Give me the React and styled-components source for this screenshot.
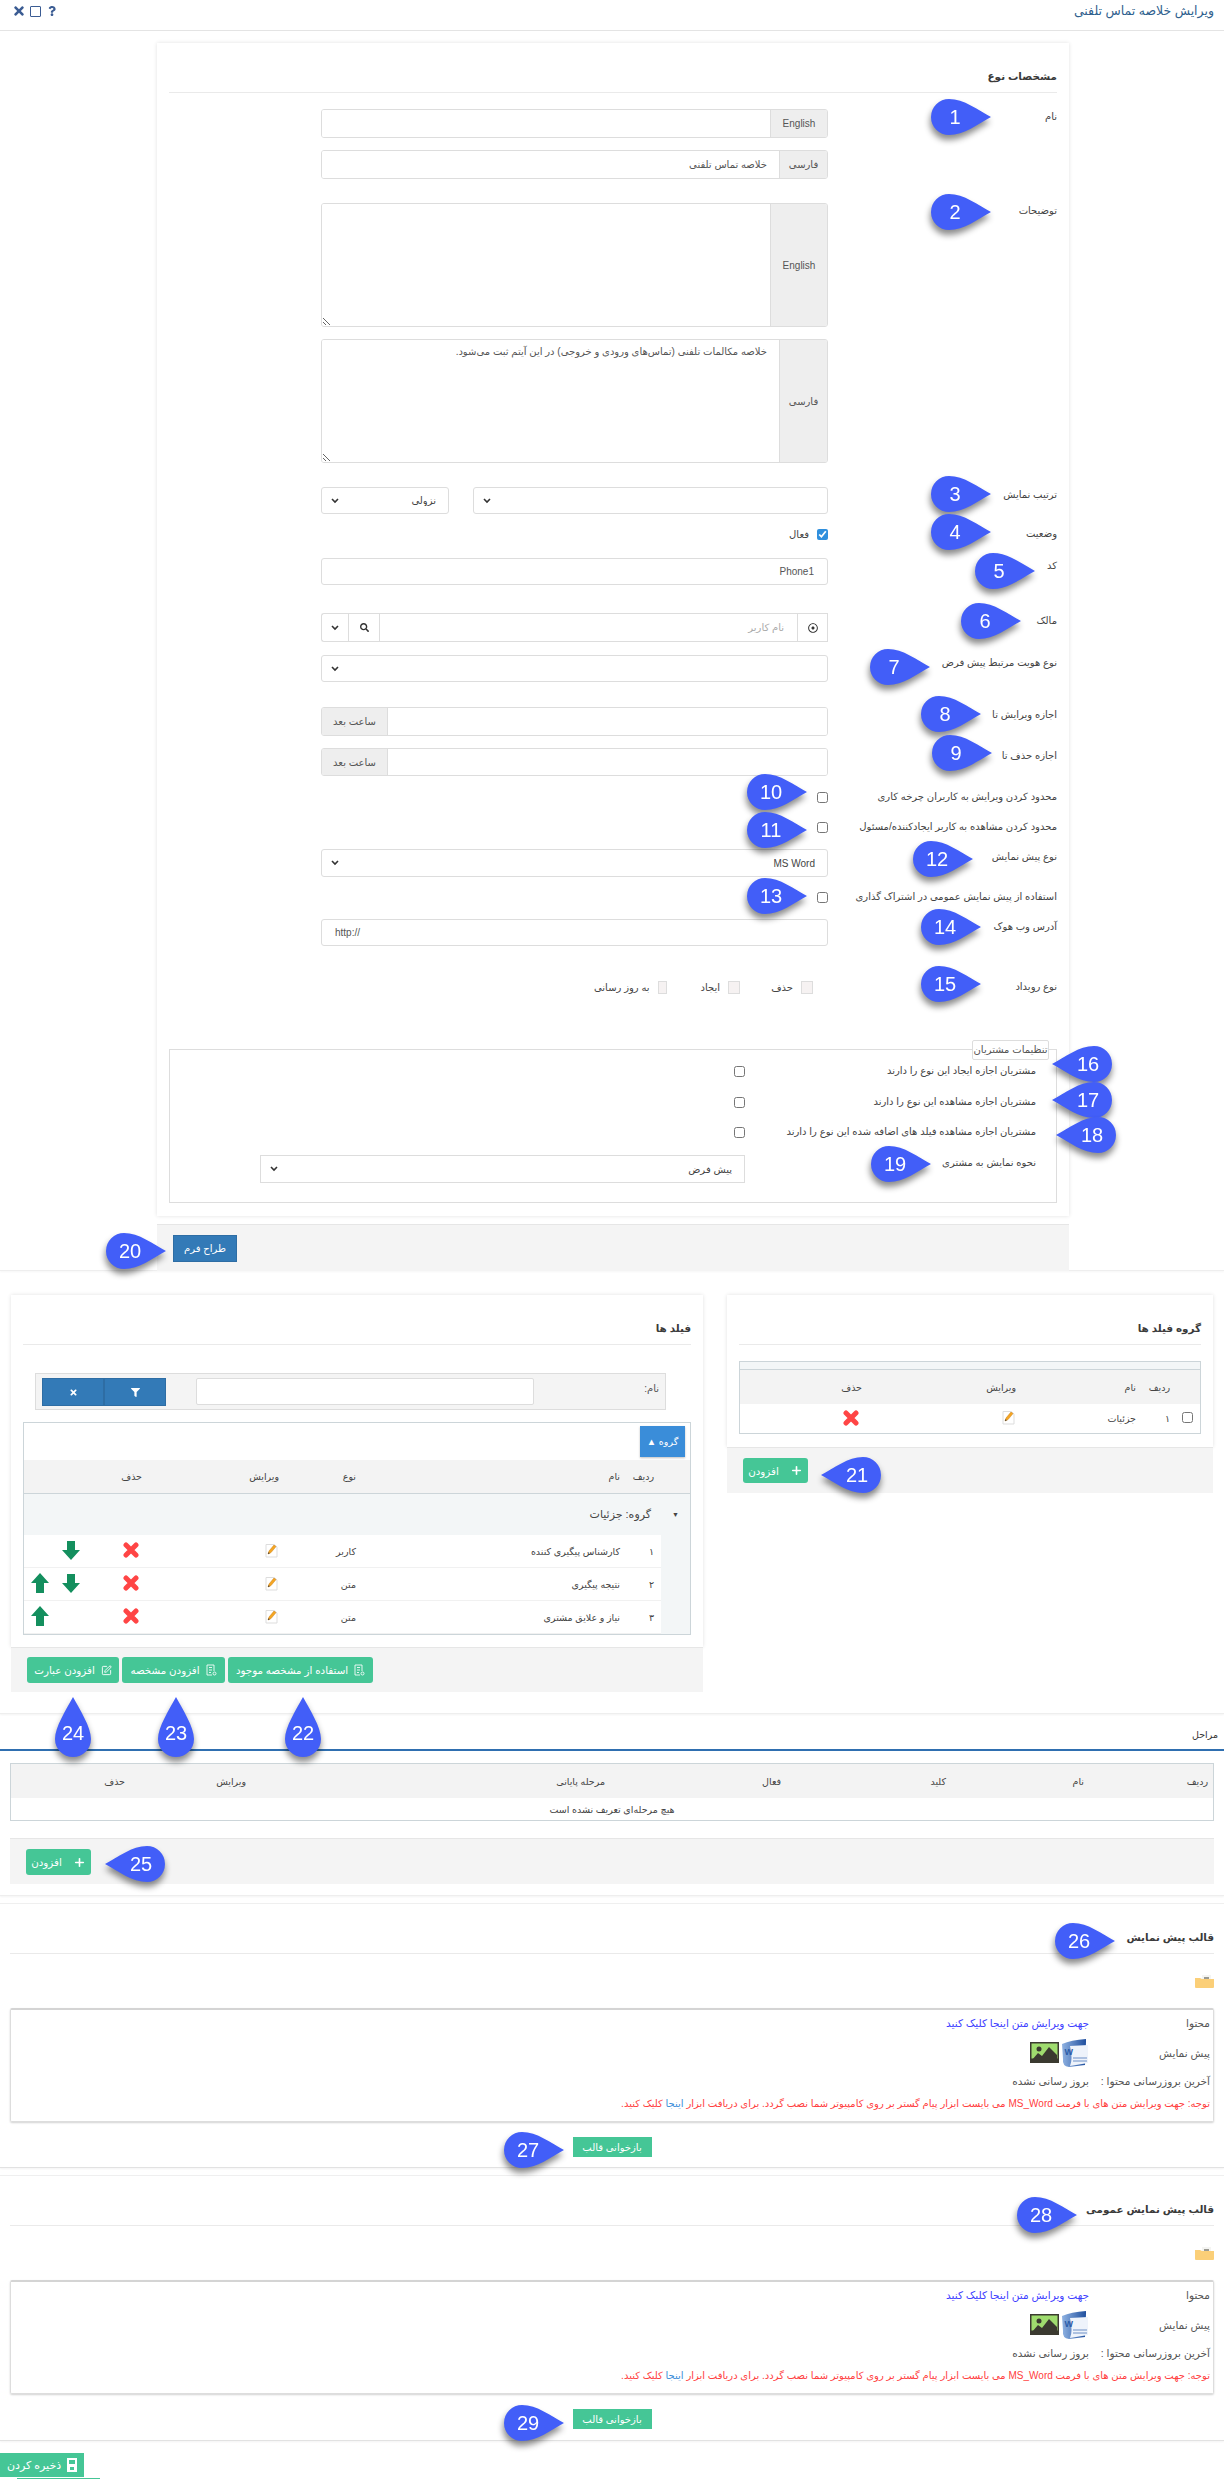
import React from 'react';
import styled, { createGlobalStyle } from 'styled-components';
import { FaTimes, FaFilter, FaSearch, FaQuestion, FaRegDotCircle } from 'react-icons/fa';
import { SquarePen, Plus } from 'lucide-react';

const stack = `"Liberation Sans", "DejaVu Sans", sans-serif`;

const Global = createGlobalStyle`
  html, body { margin: 0; padding: 0; background: #fff; }
  body { font-family: ${stack}; font-size: 10px; color: #555; }
  * { box-sizing: border-box; }
`;

const chevron = `url("data:image/svg+xml,%3Csvg xmlns='http://www.w3.org/2000/svg' width='8' height='6'%3E%3Cpath d='M1 1l3 3 3-3' fill='none' stroke='%23333' stroke-width='1.6'/%3E%3C/svg%3E")`;

const Page = styled.div`
  position: relative;
  width: 1224px;
  height: 2482px;
  overflow: hidden;
  direction: rtl;
`;
const TitleBar = styled.header`
  height: 31px;
  padding: 3px 10px 0 10px;
  border-bottom: 1px solid #e4e4e4;
  display: flex;
  justify-content: space-between;
  align-items: flex-start;
`;
const PageTitle = styled.h1`
  margin: 0;
  font-size: 12.5px;
  line-height: 16px;
  font-weight: 400;
  color: #2f5f8e;
`;
const WindowTools = styled.div`
  direction: ltr;
  display: flex;
  align-items: center;
  gap: 4px;
  height: 16px;
  padding-left: 2px;
  color: #3b5c93;
`;
const MaxBox = styled.span`
  display: block;
  width: 11px;
  height: 11px;
  border: 1px solid #3b5c93;
  border-radius: 1px;
`;
const FormSection = styled.section`
  height: 1240px;
  padding-top: 12px;
  border-bottom: 1px solid #eee;
  box-shadow: 0 1px 2px rgba(0, 0, 0, 0.04);
`;
const Card = styled.div`
  background: #fff;
  padding: 0 12px ${p => p.$pb || 12}px;
  box-shadow: 0 0 4px rgba(0, 0, 0, 0.12);
`;
const MainCard = styled(Card)`
  width: 912px;
  margin-right: 155px;
`;
const CardHeader = styled.div`
  height: 50px;
  padding-top: 25px;
  border-bottom: 1px solid #eaeaea;
`;
const CardTitle = styled.h2`
  margin: 0;
  font-size: 10.4px;
  line-height: 18px;
  font-weight: 700;
  color: #3a3a3a;
`;
const FormRow = styled.div`
  display: grid;
  grid-template-columns: ${p => p.$label || 229}px ${p => p.$control || 507}px;
  margin-top: ${p => p.$mt || 0}px;
  align-items: start;
`;
const FieldLabel = styled.label`
  font-size: 10px;
  line-height: 16px;
  color: #444;
  white-space: nowrap;
`;
const Stack = styled.div`
  display: flex;
  flex-direction: column;
  gap: 12px;
`;
const InputGroup = styled.div`
  display: flex;
  height: ${p => p.$h || 29}px;
  border: 1px solid #ddd;
  border-radius: 3px;
  overflow: hidden;
`;
const Addon = styled.span`
  flex: none;
  width: ${p => p.$w}px;
  display: flex;
  align-items: center;
  justify-content: center;
  background: #eee;
  font-family: ${stack};
  font-size: 10px;
  color: #555;
  border-${p => (p.$end ? 'right' : 'left')}: 1px solid #ddd;
`;
const BareInput = styled.input`
  flex: 1;
  min-width: 0;
  border: 0;
  outline: 0;
  padding: 0 12px;
  background: #fff;
  font: 10px ${stack};
  color: #555;
  direction: rtl;
  &::placeholder { color: #aaa; }
`;
const BareArea = styled.textarea`
  flex: 1;
  min-width: 0;
  border: 0;
  outline: 0;
  padding: 4px 12px;
  background: #fff;
  font: 10px/16px ${stack};
  color: #555;
  direction: rtl;
  resize: both;
`;
const TextInput = styled.input`
  display: block;
  width: 100%;
  height: ${p => p.$h || 27}px;
  padding: 0 13px;
  border: 1px solid #ddd;
  border-radius: 3px;
  background: #fff;
  font: 10px ${stack};
  color: #555;
  direction: ${p => (p.$ltr ? 'ltr' : 'rtl')};
  outline: 0;
`;
const Select = styled.select`
  appearance: none;
  display: block;
  flex: ${p => (p.$w ? 'none' : '1')};
  width: ${p => (p.$w ? `${p.$w}px` : '100%')};
  height: ${p => p.$h || 27}px;
  padding: 0 12px 0 24px;
  border: 1px solid #ddd;
  border-radius: ${p => (p.$square ? 0 : 3)}px;
  background: #fff ${chevron} no-repeat left 9px center;
  font: 10px ${stack};
  color: #444;
  direction: rtl;
  outline: 0;
`;
const SplitRow = styled.div`
  display: flex;
  justify-content: space-between;
  gap: 24px;
`;
const CheckLine = styled.div`
  display: flex;
  align-items: center;
  height: 16px;
  gap: ${p => p.$gap || 8}px;
`;
const Check = styled.input.attrs({ type: 'checkbox' })`
  width: 11px;
  height: 11px;
  margin: 0;
  accent-color: #2f8fdd;
`;
const MutedCheck = styled.input.attrs({ type: 'checkbox', disabled: true })`
  appearance: none;
  width: 12px;
  height: 13px;
  margin: 0;
  background: #f6f2f2;
  border: 1px solid #ddd;
`;
const CheckText = styled.span`
  font-size: 10px;
  color: #444;
  white-space: nowrap;
`;
const OwnerGroup = styled.div`
  display: flex;
  height: 29px;
`;
const OwnerAddon = styled.span`
  flex: none;
  width: ${p => p.$w}px;
  display: flex;
  align-items: center;
  justify-content: center;
  background: #fff;
  border: 1px solid #ddd;
  border-right-width: ${p => (p.$first ? 1 : 0)}px;
  color: #333;
`;
const OwnerInput = styled.input`
  flex: 1;
  min-width: 0;
  border: 1px solid #ddd;
  border-right: 0;
  padding: 0 13px;
  font: 10px ${stack};
  outline: 0;
  &::placeholder { color: #aaa; }
`;
const OwnerSelect = styled.span`
  flex: none;
  width: 27px;
  border: 1px solid #ddd;
  border-right: 0;
  border-radius: 3px 0 0 3px;
  background: #fff ${chevron} no-repeat center;
`;
const EventLine = styled.div`
  display: flex;
  align-items: center;
  height: 16px;
  padding-right: 15px;
`;
const EventItem = styled.span`
  display: flex;
  align-items: center;
  gap: 8px;
  width: 73px;
`;
const Fieldset = styled.div`
  position: relative;
  height: 154px;
  margin-top: 54px;
  padding: 13px 20px 0 0;
  border: 1px solid #ddd;
`;
const Legend = styled.span`
  position: absolute;
  top: -10px;
  right: 7px;
  height: 20px;
  width: 77px;
  border: 1px solid #ddd;
  border-radius: 2px;
  background: #fff;
  font-size: 10px;
  line-height: 18px;
  text-align: center;
  color: #555;
  white-space: nowrap;
`;
const FooterBar = styled.div`
  display: flex;
  justify-content: flex-end;
  gap: 3px;
  height: ${p => p.$h || 46}px;
  margin-top: ${p => p.$mt || 0}px;
  padding: ${p => p.$pt || 10}px 16px 0;
  background: #f4f4f4;
  border-top: 1px solid #e6e6e6;
`;
const MainFooter = styled(FooterBar)`
  width: 912px;
  margin-right: 155px;
`;
const BlueButton = styled.button`
  width: 64px;
  height: 27px;
  border: 1px solid #2e6da4;
  border-radius: 0;
  background: #337ab7;
  color: #fff;
  font: 10px ${stack};
`;
const GreenButton = styled.button`
  display: inline-flex;
  align-items: center;
  justify-content: center;
  gap: ${p => p.$gap || 6}px;
  width: ${p => p.$w}px;
  height: ${p => p.$h || 26}px;
  padding: 0;
  border: 0;
  border-radius: ${p => (p.$flat ? 0 : 3)}px;
  background: #45c696;
  color: #fff;
  font: ${p => p.$size || 10.3}px ${stack};
  white-space: nowrap;
`;
const FieldsSection = styled.section`
  height: 443px;
  padding: 24px 11px 0;
  display: flex;
  gap: 24px;
  border-bottom: 1px solid #eee;
  box-shadow: 0 1px 2px rgba(0, 0, 0, 0.05);
`;
const GroupColumn = styled.div`
  width: 486px;
  flex: none;
`;
const FieldColumn = styled.div`
  width: 692px;
  flex: none;
`;
const PlainTable = styled.table`
  width: 100%;
  table-layout: fixed;
  border-collapse: separate;
  border-spacing: 0;
  font-size: 9.5px;
  color: #444;
`;
const Framed = styled.div`
  margin-top: ${p => p.$mt || 16}px;
  border: 1px solid #ccd5d9;
`;
const Strip = styled.div`
  height: 8px;
  background: #f3f6f7;
  border-bottom: 1px solid #ccd5d9;
`;
const Head = styled.th`
  width: ${p => (p.$w ? `${p.$w}px` : 'auto')};
  height: ${p => p.$h || 34}px;
  padding: 0 ${p => p.$pr || 4}px 0 0;
  background: #f3f3f3;
  font-weight: 400;
  text-align: right;
  white-space: nowrap;
  vertical-align: middle;
  border-bottom: ${p => (p.$line ? '1px solid #ccd5d9' : '0')};
`;
const Cell = styled.td`
  height: ${p => p.$h || 33}px;
  padding: 0 ${p => p.$pr || 4}px 0 0;
  text-align: right;
  white-space: nowrap;
  vertical-align: middle;
  border-bottom: ${p => (p.$line ? '1px solid #f1f1f1' : '0')};
`;
const IndentCell = styled.td`
  background: #f3f6f7;
  padding: 0;
`;
const GroupCell = styled.td`
  height: 41px;
  padding: 0 ${p => p.$pr || 0}px 0 0;
  background: #f3f6f7;
  font-size: ${p => (p.$center ? 7 : 11)}px;
  text-align: ${p => (p.$center ? 'center' : 'right')};
`;
const EmptyCell = styled.td`
  height: 22px;
  text-align: center;
  font-size: 9.5px;
`;
const FilterBox = styled.div`
  display: flex;
  align-items: flex-start;
  height: 37px;
  margin: 28px 25px 0 12px;
  padding: 4px 6px 0 6px;
  background: #f4f4f4;
  border: 1px solid #ddd;
`;
const FilterLabel = styled.span`
  width: 125px;
  flex: none;
  padding-top: 5px;
  font-size: 10px;
`;
const FilterInput = styled.input`
  width: 338px;
  height: 27px;
  border: 1px solid #ddd;
  border-radius: 2px;
  background: #fff;
`;
const FilterButtons = styled.div`
  display: flex;
  margin-right: auto;
`;
const FilterButton = styled.button`
  width: 62px;
  height: 28px;
  display: flex;
  align-items: center;
  justify-content: center;
  background: #337ab7;
  border: 1px solid #2e6da4;
  color: #fff;
  padding: 0;
`;
const GroupPanel = styled.div`
  height: 37px;
  padding: 3px 5px 0;
`;
const GroupChip = styled.span`
  display: flex;
  align-items: center;
  justify-content: center;
  gap: 4px;
  width: 45px;
  height: 31px;
  background: #3a8dd9;
  color: #fff;
  font-size: 9.5px;
  box-shadow: 0 1px 2px rgba(0, 0, 0, 0.25);
`;
const StagesSection = styled.section`
  height: 182px;
  padding-top: 13px;
  border-bottom: 1px solid #eee;
  box-shadow: 0 1px 2px rgba(0, 0, 0, 0.05);
`;
const StagesLabel = styled.div`
  height: 24px;
  padding-right: 6px;
  font-size: 9.5px;
  line-height: 16px;
  color: #333;
  font-weight: 400;
  border-bottom: 2px solid #2f6fb0;
`;
const Inset = styled.div`
  margin: 0 10px 0 10px;
`;
const TemplateSection = styled.section`
  height: ${p => p.$h}px;
  margin-top: ${p => p.$mt}px;
  padding: 0 10px;
  border-top: 1px solid #efefef;
  border-bottom: 1px solid #e2e2e2;
  box-shadow: 0 1px 2px rgba(0, 0, 0, 0.05);
  display: flex;
  flex-direction: column;
`;
const FolderLine = styled.div`
  height: 13px;
  margin-top: 21px;
`;
const TemplateBox = styled.div`
  height: 114px;
  margin-top: 20px;
  padding: 5px 3px 0 0;
  border: 1px solid #ddd;
  border-top: 2px solid #d4d4d4;
  border-radius: 2px;
  box-shadow: 0 1px 2px rgba(0, 0, 0, 0.18);
`;
const InfoRow = styled.div`
  display: grid;
  grid-template-columns: 121px 1fr;
  align-items: center;
  min-height: 16px;
  margin-top: ${p => p.$mt || 0}px;
  font-size: 10.5px;
  color: #555;
  white-space: nowrap;
`;
const EditLink = styled.a`
  color: #4040ff;
  text-decoration: none;
`;
const IconPair = styled.div`
  display: flex;
  align-items: center;
  gap: 2px;
  height: 27px;
`;
const Note = styled.div`
  margin-top: 7px;
  font-size: 10px;
  line-height: 16px;
  color: #ff4040;
  white-space: nowrap;
`;
const NoteLink = styled.a`
  color: #3a8dd9;
  text-decoration: none;
`;
const CenterLine = styled.div`
  display: flex;
  justify-content: center;
  margin-top: 15px;
`;
const SaveBar = styled.div`
  margin-top: 12px;
  display: flex;
  flex-direction: column;
  align-items: flex-end;
`;
const SaveUnderline = styled.span`
  display: block;
  width: 83px;
  height: 1px;
  margin: 1px 0 0;
  transform: translateX(17px);
  background: #45c696;
`;
const Tear = styled.div`
  position: absolute;
  left: ${p => p.$x}px;
  top: ${p => p.$y}px;
  width: ${p => (p.$dir === 'up' ? 36 : 60)}px;
  height: ${p => (p.$dir === 'up' ? 60 : 36)}px;
  padding: ${p => (p.$dir === 'up' ? '12px 0 0' : p.$dir === 'left' ? '0 0 0 12px' : '0 12px 0 0')};
  display: flex;
  align-items: center;
  justify-content: center;
  direction: ltr;
  filter: drop-shadow(${p => (p.$dir === 'right' ? '-1px' : '0')} 5px 3px rgba(0, 0, 0, 0.45));
  font: 20px "Liberation Sans", sans-serif;
  color: #fff;
  & > svg { position: absolute; inset: 0; }
  & > span { position: relative; }
`;

const tearPaths = {
  right: 'M18 0C33 0 47 11 60 18C47 25 33 36 18 36A18 18 0 0 1 18 0Z',
  left: 'M42 0C27 0 13 11 0 18C13 25 27 36 42 36A18 18 0 0 0 42 0Z',
  up: 'M0 42C0 30 11 13 18 0C25 13 36 30 36 42A18 18 0 0 1 0 42Z',
};
const callouts = [
  [1, 931, 99], [2, 931, 194], [3, 931, 476], [4, 931, 514], [5, 975, 553], [6, 961, 603], [7, 870, 649],
  [8, 921, 696], [9, 932, 735], [10, 747, 774], [11, 747, 812], [12, 913, 841], [13, 747, 878], [14, 921, 909],
  [15, 921, 966], [16, 1052, 1046, 'left'], [17, 1052, 1082, 'left'], [18, 1056, 1117, 'left'], [19, 871, 1146],
  [20, 106, 1233], [21, 821, 1457, 'left'], [22, 285, 1697, 'up'], [23, 158, 1697, 'up'], [24, 55, 1697, 'up'],
  [25, 105, 1846, 'left'], [26, 1055, 1923], [27, 504, 2132], [28, 1017, 2197], [29, 504, 2405],
];
const Callout = ({ n, x, y, dir = 'right' }) => (
  <Tear $x={x} $y={y} $dir={dir}>
    <svg width={dir === 'up' ? 36 : 60} height={dir === 'up' ? 60 : 36}><path d={tearPaths[dir]} fill="#425ef8" /></svg>
    <span>{n}</span>
  </Tear>
);

const EditIcon = () => (
  <svg width="13" height="15" viewBox="0 0 13 15">
    <path d="M1 1.500h8l3 2.500v10H1z" fill="#fff" stroke="#ddd" />
    <path d="M3 11l1-3 5-6 2 1.600-5 6z" fill="#f5a623" stroke="#c97c10" strokeWidth=".5" />
    <path d="M3 11l.5-1.800 1.400 1z" fill="#333" />
  </svg>
);
const CrossIcon = () => (
  <svg width="16" height="16" viewBox="0 0 16 16">
    <path d="M3 3l10 10M13 3L3 13" stroke="#ff4545" strokeWidth="5" strokeLinecap="round" />
  </svg>
);
const ArrowDown = () => (
  <svg width="18" height="19" viewBox="0 0 18 19">
    <path d="M5 0h8v9h5l-9 10L0 9h5z" fill="#148f5e" />
  </svg>
);
const ArrowUp = () => (
  <svg width="18" height="20" viewBox="0 0 18 20">
    <path d="M9 0l9 10h-5v10H5V10H0z" fill="#148f5e" />
  </svg>
);
const DocIcon = () => (
  <svg width="11" height="12" viewBox="0 0 11 12" fill="none" stroke="#fff" strokeOpacity=".85">
    <path d="M8 7V1H1v10h5M3 3.500h3M3 6h3M3 8.500h2" />
    <circle cx="8.500" cy="9.500" r="1.500" />
  </svg>
);
const FloppyIcon = () => (
  <svg width="10" height="14" viewBox="0 0 10 14">
    <path d="M0 0h10v14H0z" fill="#fff" />
    <path d="M2 2h6v4H2z" fill="#45c696" />
    <path d="M3 9h4v3H3z" fill="#45c696" />
  </svg>
);
const FolderIcon = () => (
  <svg width="19" height="13" viewBox="0 0 19 13" style={{ display: 'block' }}>
    <path d="M7 0h9v6H7z" fill="#f4f4f2" />
    <path d="M9 2h5v2H9z" fill="#9a9a92" />
    <path d="M0 3h5l2 1h12v8a1 1 0 0 1-1 1H1a1 1 0 0 1-1-1z" fill="#fbcf78" />
  </svg>
);
const WordIcon = () => (
  <svg width="28" height="28" viewBox="0 0 28 28">
    <defs>
      <linearGradient id="wg" x1="0" x2="1">
        <stop offset="0" stopColor="#8fb2e2" />
        <stop offset="1" stopColor="#1f4f9e" />
      </linearGradient>
    </defs>
    <path d="M1 5Q10 1 25 0v3L24 26 8 28Q1 27 2 20z" fill="url(#wg)" />
    <path d="M9 7l18-1v18L9 27Q12 20 9 7z" fill="#eef3fb" />
    <text x="12" y="16" fontFamily="Liberation Sans, sans-serif" fontWeight="700" fontSize="9" fill="#2b5ca8">W</text>
    <path d="M12 19h14M12 22h14" stroke="#6d8fc6" />
  </svg>
);
const PictureIcon = () => (
  <svg width="29" height="21" viewBox="0 0 29 21">
    <rect width="29" height="21" fill="#3b3a30" />
    <rect x="1.500" y="1.500" width="26" height="15" fill="#9fdc6e" />
    <circle cx="9" cy="7" r="2.500" fill="#3b3a30" />
    <path d="M2 18l6-7 4 3 7-9 8 8v5H2z" fill="#3b3a30" />
  </svg>
);

const FormLabelRow = ({ label, children, mt, ...rest }) => (
  <FormRow $mt={mt} {...rest}>
    <FieldLabel>{label}</FieldLabel>
    {children}
  </FormRow>
);

const TemplateBlock = ({ title, h, mt }) => (
  <TemplateSection $h={h} $mt={mt}>
    <CardHeader><CardTitle>{title}</CardTitle></CardHeader>
    <FolderLine><FolderIcon /></FolderLine>
    <TemplateBox>
      <InfoRow><span>محتوا</span><EditLink href="#">جهت ویرایش متن اینجا کلیک کنید</EditLink></InfoRow>
      <InfoRow $mt={8}>
        <span>پیش نمایش</span>
        <IconPair><WordIcon /><PictureIcon /></IconPair>
      </InfoRow>
      <InfoRow $mt={7}><span>آخرین بروزرسانی محتوا :</span><span>بروز رسانی نشده</span></InfoRow>
      <Note>
        توجه: جهت ویرایش متن های با فرمت MS_Word می بایست ابزار پیام گستر بر روی کامپیوتر شما نصب گردد. برای دریافت ابزار <NoteLink href="#">اینجا</NoteLink> کلیک کنید.
      </Note>
    </TemplateBox>
    <CenterLine><GreenButton $w={79} $h={20} $flat $size={10}>بازخوانی قالب</GreenButton></CenterLine>
  </TemplateSection>
);

const fieldRows = [
  { i: '۱', name: 'کارشناس پیگیری کننده', type: 'کاربر', down: true },
  { i: '۲', name: 'نتیجه پیگیری', type: 'متن', down: true, up: true },
  { i: '۳', name: 'نیاز و علایق مشتری', type: 'متن', up: true },
];

export default function App() {
  return (
    <Page>
      <Global />
      <TitleBar>
        <PageTitle>ویرایش خلاصه تماس تلفنی</PageTitle>
        <WindowTools>
          <FaTimes size={14} />
          <MaxBox />
          <FaQuestion size={10} style={{ marginLeft: 2 }} />
        </WindowTools>
      </TitleBar>

      <FormSection>
        <MainCard $pb={13}>
          <CardHeader><CardTitle>مشخصات نوع</CardTitle></CardHeader>
          <FormLabelRow label="نام" mt={16}>
            <Stack>
              <InputGroup><Addon $w={57} dir="ltr">English</Addon><BareInput /></InputGroup>
              <InputGroup><Addon $w={48}>فارسی</Addon><BareInput defaultValue="خلاصه تماس تلفنی" /></InputGroup>
            </Stack>
          </FormLabelRow>
          <FormLabelRow label="توضیحات" mt={24}>
            <Stack>
              <InputGroup $h={124}><Addon $w={57} dir="ltr">English</Addon><BareArea /></InputGroup>
              <InputGroup $h={124}>
                <Addon $w={48}>فارسی</Addon>
                <BareArea defaultValue="خلاصه مکالمات تلفنی (تماس‌های ورودی و خروجی) در این آیتم ثبت می‌شود." />
              </InputGroup>
            </Stack>
          </FormLabelRow>
          <FormLabelRow label="ترتیب نمایش" mt={24}>
            <SplitRow>
              <Select aria-label="فیلد"><option /></Select>
              <Select $w={128} defaultValue="d" aria-label="جهت"><option value="d">نزولی</option></Select>
            </SplitRow>
          </FormLabelRow>
          <FormLabelRow label="وضعیت" mt={12}>
            <CheckLine><Check defaultChecked /><CheckText>فعال</CheckText></CheckLine>
          </FormLabelRow>
          <FormLabelRow label="کد" mt={16}><TextInput defaultValue="Phone1" /></FormLabelRow>
          <FormLabelRow label="مالک" mt={28}>
            <OwnerGroup>
              <OwnerAddon $w={31} $first><FaRegDotCircle size={10} /></OwnerAddon>
              <OwnerInput placeholder="نام کاربر" />
              <OwnerAddon $w={31}><FaSearch size={9} /></OwnerAddon>
              <OwnerSelect />
            </OwnerGroup>
          </FormLabelRow>
          <FormLabelRow label="نوع هویت مرتبط پیش فرض" mt={13}>
            <Select aria-label="نوع هویت"><option /></Select>
          </FormLabelRow>
          <FormLabelRow label="اجازه ویرایش تا" mt={25}>
            <InputGroup><BareInput /><Addon $w={66} $end>ساعت بعد</Addon></InputGroup>
          </FormLabelRow>
          <FormLabelRow label="اجازه حذف تا" mt={12}>
            <InputGroup $h={28}><BareInput /><Addon $w={66} $end>ساعت بعد</Addon></InputGroup>
          </FormLabelRow>
          <FormLabelRow label="محدود کردن ویرایش به کاربران چرخه کاری" mt={13}>
            <CheckLine><Check /></CheckLine>
          </FormLabelRow>
          <FormLabelRow label="محدود کردن مشاهده به کاربر ایجادکننده/مسئول" mt={14}>
            <CheckLine><Check /></CheckLine>
          </FormLabelRow>
          <FormLabelRow label="نوع پیش نمایش" mt={14}>
            <Select $h={28} defaultValue="w" aria-label="نوع پیش نمایش"><option value="w">MS Word</option></Select>
          </FormLabelRow>
          <FormLabelRow label="استفاده از پیش نمایش عمومی در اشتراک گذاری" mt={12}>
            <CheckLine><Check /></CheckLine>
          </FormLabelRow>
          <FormLabelRow label="آدرس وب هوک" mt={14}><TextInput $ltr defaultValue="http://" /></FormLabelRow>
          <FormLabelRow label="نوع رویداد" mt={33}>
            <EventLine>
              <EventItem><MutedCheck /><CheckText>حذف</CheckText></EventItem>
              <EventItem><MutedCheck /><CheckText>ایجاد</CheckText></EventItem>
              <EventItem><MutedCheck /><CheckText>به روز رسانی</CheckText></EventItem>
            </EventLine>
          </FormLabelRow>
          <Fieldset>
            <Legend>تنظیمات مشتریان</Legend>
            <FormRow $label={291} $control={485}>
              <FieldLabel>مشتریان اجازه ایجاد این نوع را دارند</FieldLabel>
              <CheckLine><Check /></CheckLine>
            </FormRow>
            <FormRow $label={291} $control={485} $mt={15}>
              <FieldLabel>مشتریان اجازه مشاهده این نوع را دارند</FieldLabel>
              <CheckLine><Check /></CheckLine>
            </FormRow>
            <FormRow $label={291} $control={485} $mt={14}>
              <FieldLabel>مشتریان اجازه مشاهده فیلد های اضافه شده این نوع را دارند</FieldLabel>
              <CheckLine><Check /></CheckLine>
            </FormRow>
            <FormRow $label={291} $control={485} $mt={15}>
              <FieldLabel>نحوه نمایش به مشتری</FieldLabel>
              <Select $h={28} $square defaultValue="d" aria-label="نحوه نمایش"><option value="d">پیش فرض</option></Select>
            </FormRow>
          </Fieldset>
        </MainCard>
        <MainFooter $mt={8} $h={47}><BlueButton>طراح فرم</BlueButton></MainFooter>
      </FormSection>

      <FieldsSection>
        <GroupColumn>
          <Card $pb={13}>
            <CardHeader><CardTitle>گروه فیلد ها</CardTitle></CardHeader>
            <Framed>
              <Strip />
              <PlainTable>
                <thead>
                  <tr>
                    <Head $w={25} />
                    <Head $w={35} $pr={5}>ردیف</Head>
                    <Head $w={120}>نام</Head>
                    <Head $w={140}>ویرایش</Head>
                    <Head $pr={18}>حذف</Head>
                  </tr>
                </thead>
                <tbody>
                  <tr>
                    <Cell $h={29} $pr={7}><Check /></Cell>
                    <Cell $h={29} $pr={5}>۱</Cell>
                    <Cell $h={29}>جزئیات</Cell>
                    <Cell $h={29} $pr={5}><EditIcon /></Cell>
                    <Cell $h={29} $pr={21}><CrossIcon /></Cell>
                  </tr>
                </tbody>
              </PlainTable>
            </Framed>
          </Card>
          <FooterBar $h={46}><GreenButton $w={65} $h={25} $gap={11}><Plus size={13} strokeWidth={3} />افزودن</GreenButton></FooterBar>
        </GroupColumn>

        <FieldColumn>
          <Card $pb={12}>
            <CardHeader><CardTitle>فیلد ها</CardTitle></CardHeader>
            <FilterBox>
              <FilterLabel>نام:</FilterLabel>
              <FilterInput />
              <FilterButtons>
                <FilterButton><FaFilter size={9} /></FilterButton>
                <FilterButton><FaTimes size={9} /></FilterButton>
              </FilterButtons>
            </FilterBox>
            <Framed $mt={12}>
              <GroupPanel><GroupChip>گروه ▲</GroupChip></GroupPanel>
              <PlainTable>
                <thead>
                  <tr>
                    <Head $w={29} $line />
                    <Head $w={37} $pr={7} $line>ردیف</Head>
                    <Head $w={264} $line>نام</Head>
                    <Head $w={77} $line>نوع</Head>
                    <Head $w={133} $line>ویرایش</Head>
                    <Head $w={60} $pr={8} $line>حذف</Head>
                    <Head $w={35} $line />
                    <Head $line />
                  </tr>
                </thead>
                <tbody>
                  <tr>
                    <GroupCell $center>▼</GroupCell>
                    <GroupCell colSpan={7} $pr={10}>گروه: جزئیات</GroupCell>
                  </tr>
                  {fieldRows.map(r => (
                    <tr key={r.i}>
                      <IndentCell />
                      <Cell $line $pr={7}>{r.i}</Cell>
                      <Cell $line>{r.name}</Cell>
                      <Cell $line>{r.type}</Cell>
                      <Cell $line $pr={5}><EditIcon /></Cell>
                      <Cell $line $pr={11}><CrossIcon /></Cell>
                      <Cell $line $pr={10}>{r.down && <ArrowDown />}</Cell>
                      <Cell $line $pr={6}>{r.up && <ArrowUp />}</Cell>
                    </tr>
                  ))}
                </tbody>
              </PlainTable>
            </Framed>
          </Card>
          <FooterBar $h={45} $pt={9}>
            <GreenButton $w={145}><DocIcon />استفاده از مشخصه موجود</GreenButton>
            <GreenButton $w={103}><DocIcon />افزودن مشخصه</GreenButton>
            <GreenButton $w={92}><SquarePen size={11} />افزودن عبارت</GreenButton>
          </FooterBar>
        </FieldColumn>
      </FieldsSection>

      <StagesSection>
        <StagesLabel>مراحل</StagesLabel>
        <Inset>
          <Framed $mt={12}>
            <PlainTable>
              <thead>
                <tr>
                  <Head $w={123} $pr={5}>ردیف</Head>
                  <Head $w={140} $pr={6}>نام</Head>
                  <Head $w={165}>کلید</Head>
                  <Head $w={175}>فعال</Head>
                  <Head $w={360} $pr={5}>مرحله پایانی</Head>
                  <Head $w={120}>ویرایش</Head>
                  <Head $pr={5}>حذف</Head>
                </tr>
              </thead>
              <tbody>
                <tr><EmptyCell colSpan={7}>هیچ مرحله‌ای تعریف نشده است</EmptyCell></tr>
              </tbody>
            </PlainTable>
          </Framed>
          <FooterBar $mt={17} $h={46}><GreenButton $w={65} $gap={11}><Plus size={13} strokeWidth={3} />افزودن</GreenButton></FooterBar>
        </Inset>
      </StagesSection>

      <TemplateBlock title="قالب پیش نمایش" h={265} mt={7} />
      <TemplateBlock title="قالب پیش نمایش عمومی" h={266} mt={7} />

      <SaveBar>
        <GreenButton $w={84} $h={24} $flat $size={11}><FloppyIcon />ذخیره کردن</GreenButton>
        <SaveUnderline />
      </SaveBar>

      {callouts.map(([n, x, y, dir]) => <Callout key={n} n={n} x={x} y={y} dir={dir} />)}
    </Page>
  );
}
